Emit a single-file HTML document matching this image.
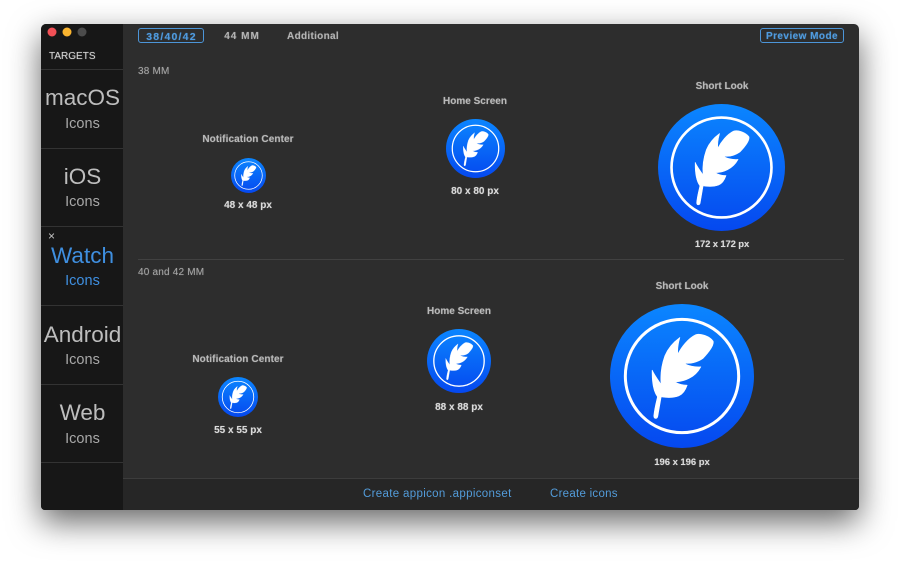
<!DOCTYPE html>
<html><head><meta charset="utf-8">
<style>
html,body{margin:0;padding:0;width:900px;height:569px;overflow:hidden;background:#fff;font-family:"Liberation Sans",sans-serif}
.win{position:absolute;left:41px;top:24px;width:818px;height:486px;background:#2d2d2d;border-radius:5px 5px 4px 4px;box-shadow:0 12px 32px rgba(0,0,0,.6);overflow:hidden}
.t{position:absolute;white-space:nowrap;transform:translateX(-50%);line-height:12px}
.l{position:absolute;white-space:nowrap;line-height:12px}
.side{position:absolute;left:41px;top:24px;width:82px;height:486px;background:#171717;border-radius:5px 0 0 4px}
.sep{position:absolute;left:41px;width:82px;height:1px;background:#333}
.big{font-size:22.5px;color:#bdbdbd;line-height:26px;text-align:center;position:absolute;left:41px;width:83px}
.sm{font-size:14.5px;color:#a8a8a8;line-height:16px;text-align:center;position:absolute;left:41px;width:83px}
.h{font-size:10px;font-weight:bold;color:#b9b9b9;letter-spacing:.1px;text-shadow:0 0 1px rgba(185,185,185,.6)}
.p{font-size:10px;font-weight:bold;color:#dcdcdc;text-shadow:0 0 1px rgba(220,220,220,.5)}
.s{font-size:10px;color:#a5a5a5;letter-spacing:.2px;text-shadow:0 0 1px rgba(165,165,165,.5)}
.tab{font-size:10px;font-weight:bold;color:#b4b4b4;text-shadow:0 0 1px rgba(180,180,180,.5)}
.blue{color:#4f9bdf;text-shadow:0 0 1px rgba(79,155,223,.6)}
.btn{position:absolute;box-sizing:border-box;border:1px solid #4c95d8;border-radius:3px;height:15px}
svg.i{position:absolute}
.lk{font-size:11.5px;color:#539cda}
</style></head><body>
<svg width="0" height="0" style="position:absolute"><defs>
<linearGradient id="g" x1="0" y1="0" x2="0" y2="1"><stop offset="0" stop-color="#0b86ff"/><stop offset="1" stop-color="#0548ef"/></linearGradient>
<symbol id="ic" viewBox="-106.5 -73.5 432 432">
<circle cx="109.5" cy="142.5" r="216" fill="url(#g)"/>
<circle cx="109.5" cy="142.5" r="170" fill="none" stroke="#fff" stroke-width="9"/>
<path fill="#fff" stroke="#fff" stroke-width="2" stroke-linejoin="round" d="M97 77C108 55 128 30 150 19C165 13 193 24 203 38C206 50 193 68 172 90C155 102 135 106 120 104L120 107C135 114 152 116 166 115C158 130 145 143 130 150C118 156 102 160 88 160C100 168 113 170 125 170C120 185 112 197 100 202C85 208 65 208 47 205L37 263C35 272 25 272 25 262C27 240 32 222 36 205C25 190 19 165 20 125C27 140 38 155 47 168C44 140 48 110 58 82C68 58 85 40 103 27C98 45 95 60 97 77Z"/>
</symbol></defs></svg>

<div class="win"></div>
<div class="side"></div>

<svg style="position:absolute;left:47px;top:27px" width="42" height="10"><circle cx="5" cy="5" r="4.5" fill="#f25056"/><circle cx="20" cy="5" r="4.5" fill="#fab42f"/><circle cx="35" cy="5" r="4.5" fill="#4c4c4c"/></svg>

<div class="l" style="left:49px;top:51px;font-size:10px;color:#d4d4d4;text-shadow:0 0 1px rgba(212,212,212,.5)">TARGETS</div>
<div class="sep" style="top:69px"></div>
<div class="big" style="top:85px">macOS</div><div class="sm" style="top:116px">Icons</div>
<div class="sep" style="top:148px"></div>
<div class="big" style="top:164px">iOS</div><div class="sm" style="top:194px">Icons</div>
<div class="sep" style="top:226px"></div>
<div class="l" style="left:48px;top:230px;font-size:12px;color:#c4c4c4">×</div>
<div class="big" style="top:243px;color:#3f8fe0">Watch</div><div class="sm" style="top:273px;color:#3f8fe0">Icons</div>
<div class="sep" style="top:305px"></div>
<div class="big" style="top:322px">Android</div><div class="sm" style="top:352px">Icons</div>
<div class="sep" style="top:384px"></div>
<div class="big" style="top:400px">Web</div><div class="sm" style="top:431px">Icons</div>
<div class="sep" style="top:462px"></div>

<div class="btn" style="left:138px;top:28px;width:66px"></div>
<div class="t tab blue" style="left:171.5px;top:30.5px;font-size:10.5px;letter-spacing:1.2px">38/40/42</div>
<div class="t tab" style="left:242px;top:30.5px;letter-spacing:1px">44 MM</div>
<div class="t tab" style="left:313px;top:30.5px;letter-spacing:.3px">Additional</div>
<div class="btn" style="left:760px;top:28px;width:84px"></div>
<div class="t tab blue" style="left:802px;top:30.5px;letter-spacing:.45px">Preview Mode</div>

<div class="l s" style="left:138px;top:66px">38 MM</div>
<div class="t h" style="left:248px;top:134px">Notification Center</div>
<svg class="i" style="left:230.5px;top:157.5px" width="35" height="35"><use href="#ic" width="35" height="35"/></svg>
<div class="t p" style="left:248px;top:200px">48 x 48 px</div>

<div class="t h" style="left:475px;top:96px;letter-spacing:0">Home Screen</div>
<svg class="i" style="left:445.5px;top:118.5px" width="59" height="59"><use href="#ic" width="59" height="59"/></svg>
<div class="t p" style="left:475px;top:186px">80 x 80 px</div>

<div class="t h" style="left:722px;top:81px;letter-spacing:0">Short Look</div>
<svg class="i" style="left:658px;top:104px" width="127" height="127"><use href="#ic" width="127" height="127"/></svg>
<div class="t p" style="left:722px;top:239px;font-size:9.5px;letter-spacing:-.15px">172 x 172 px</div>

<div style="position:absolute;left:138px;top:259px;width:706px;height:1px;background:#414141"></div>
<div class="l s" style="left:138px;top:267px">40 and 42 MM</div>

<div class="t h" style="left:238px;top:354px">Notification Center</div>
<svg class="i" style="left:218px;top:377px" width="40" height="40"><use href="#ic" width="40" height="40"/></svg>
<div class="t p" style="left:238px;top:425px">55 x 55 px</div>

<div class="t h" style="left:459px;top:306px;letter-spacing:0">Home Screen</div>
<svg class="i" style="left:427px;top:329px" width="64" height="64"><use href="#ic" width="64" height="64"/></svg>
<div class="t p" style="left:459px;top:402px">88 x 88 px</div>

<div class="t h" style="left:682px;top:281px;letter-spacing:0">Short Look</div>
<svg class="i" style="left:609.5px;top:303.5px" width="144" height="144"><use href="#ic" width="144" height="144"/></svg>
<div class="t p" style="left:682px;top:457px;font-size:9.5px;letter-spacing:-.05px">196 x 196 px</div>

<div style="position:absolute;left:123px;top:478px;width:736px;height:32px;background:#262626;border-top:1px solid #3c3c3c;box-sizing:border-box;border-radius:0 0 4px 0"></div>
<div class="l lk" style="left:363px;top:488px;letter-spacing:.33px">Create appicon .appiconset</div>
<div class="l lk" style="left:550px;top:488px;letter-spacing:.27px">Create icons</div>
</body></html>
